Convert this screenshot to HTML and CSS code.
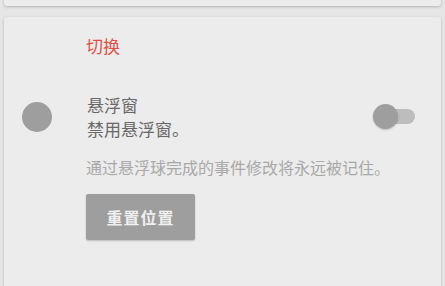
FILE: index.html
```html
<!DOCTYPE html>
<html lang="zh">
<head>
    <meta name="viewport" content="width=device-width, initial-scale=1">
    <title>悬浮窗设置</title>
    <link rel="stylesheet" href="styles.css">
</head>
<body>

    <div class="card card-top"></div>

    <div class="card">
        <div class="section-title">切换</div>

        <div class="row">
            <div class="dot"></div>
            <div class="row-text">
                <div class="row-title">悬浮窗</div>
                <div class="row-sub">禁用悬浮窗。</div>
            </div>
            <div class="switch">
                <div class="switch-track"></div>
                <div class="switch-thumb"></div>
            </div>
        </div>

        <div class="note">通过悬浮球完成的事件修改将永远被记住。</div>

        <button class="reset-btn">重置位置</button>
    </div>

</body>
</html>
```

FILE: styles.css
```css
/* General */
body {
    margin: 0;
    padding: 0 4px;
    background-color: #e6e6e6;
    font-family: "Noto Sans CJK SC", "Noto Sans", sans-serif;
    height: 286px;
    overflow: hidden;
}

/* Cards */
.card {
    background-color: #ececec;
    border-radius: 3px;
    box-shadow: 0 1px 3px rgba(0, 0, 0, 0.22);
    margin-top: 11px;
    padding: 17px 0 60px 0;
}

.card-top {
    margin-top: -20px;
    height: 26px;
    padding: 0;
}

.section-title {
    color: #df5046;
    font-size: 17px;
    line-height: 24px;
    padding-left: 82px;
}

/* Setting row */
.row {
    display: flex;
    align-items: center;
    margin-top: 35px;
    height: 48px;
}

.dot {
    width: 30px;
    height: 30px;
    border-radius: 50%;
    background-color: #9e9e9e;
    margin-left: 18px;
}

.row-text {
    flex: 1;
    margin-left: 35px;
    color: #686868;
    font-size: 17px;
    line-height: 24px;
}

.switch {
    position: relative;
    width: 44px;
    height: 26px;
    margin-right: 24px;
}

.switch-track {
    position: absolute;
    left: 6px;
    top: 5px;
    width: 36px;
    height: 15px;
    border-radius: 8px;
    background-color: #bdbdbd;
}

.switch-thumb {
    position: absolute;
    left: 0;
    top: 0;
    width: 25px;
    height: 25px;
    border-radius: 50%;
    background-color: #9e9e9e;
    box-shadow: 0 1px 2px rgba(0, 0, 0, 0.2);
}

.note {
    color: #a8a8a8;
    font-size: 16px;
    line-height: 22px;
    padding-left: 82px;
    margin-top: 15px;
}

/* Button */
.reset-btn {
    display: block;
    margin: 16px 0 0 82px;
    width: 109px;
    height: 46px;
    border: none;
    border-radius: 2px;
    background-color: #9e9e9e;
    color: #f0f0f0;
    font-family: "Noto Sans CJK SC", sans-serif;
    font-size: 16px;
    font-weight: bold;
    letter-spacing: 1px;
    box-shadow: 0 1px 2px rgba(0, 0, 0, 0.2);
}
```
